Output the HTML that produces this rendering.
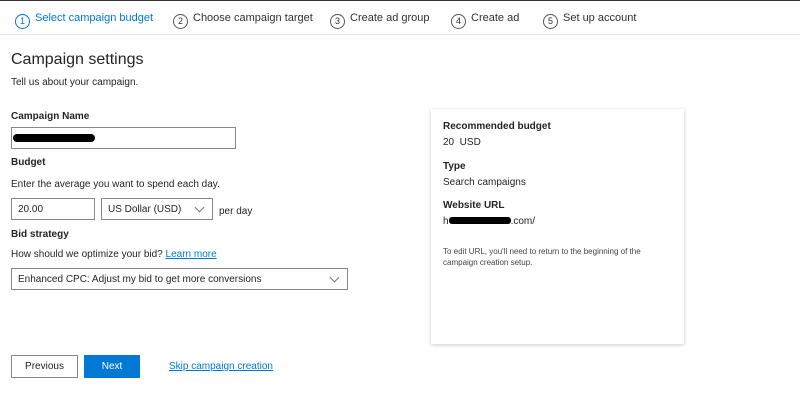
<!DOCTYPE html><html><head><style>
body{margin:0;width:800px;height:404px;background:#fff;font-family:"Liberation Sans",sans-serif;color:#252423;position:relative;overflow:hidden}
.a{position:absolute;white-space:nowrap}
.s{font-size:11px;color:#323130}
.c{display:inline-block;width:13px;height:13px;border:1px solid #555;border-radius:50%;font-size:9px;text-align:center;line-height:13px;margin-right:5px;vertical-align:-3px}
.b{font-weight:bold;font-size:10px}
.t{font-size:10px}
.box{position:absolute;border:1px solid #8a8886;background:#fff;box-sizing:border-box}
.chev{position:absolute;width:6px;height:6px;border-right:1px solid #777;border-bottom:1px solid #777;transform:rotate(45deg)}
</style></head><body>
<div class="a" style="left:0;top:0;width:800px;height:1px;background:#333"></div>
<div class="a" style="left:0;top:34px;width:800px;height:1px;background:#e6e6e6"></div>
<div class="a s" style="left:15px;top:12px;color:#0078d4"><span class="c" style="border-color:#0078d4;color:#0078d4">1</span>Select campaign budget</div>
<div class="a s" style="left:173px;top:12px"><span class="c">2</span>Choose campaign target</div>
<div class="a s" style="left:330px;top:12px"><span class="c">3</span>Create ad group</div>
<div class="a s" style="left:451px;top:12px"><span class="c">4</span>Create ad</div>
<div class="a s" style="left:543px;top:12px"><span class="c">5</span>Set up account</div>
<div class="a" style="left:11px;top:51px;font-size:16px">Campaign settings</div>
<div class="a t" style="left:11px;top:77px">Tell us about your campaign.</div>
<div class="a b" style="left:11px;top:111px">Campaign Name</div>
<div class="box" style="left:11px;top:127px;width:225px;height:22px"><div style="position:absolute;left:1px;top:6px;width:82px;height:8px;background:#000;border-radius:4px"></div></div>
<div class="a b" style="left:11px;top:157px">Budget</div>
<div class="a t" style="left:11px;top:179px">Enter the average you want to spend each day.</div>
<div class="box" style="left:11px;top:198px;width:84px;height:22px;font-size:10px;padding:5px 0 0 6px">20.00</div>
<div class="box" style="left:101px;top:198px;width:112px;height:22px;font-size:10px;padding:5px 0 0 6px">US Dollar (USD)<div class="chev" style="right:9px;top:5px"></div></div>
<div class="a t" style="left:219px;top:206px">per day</div>
<div class="a b" style="left:11px;top:229px">Bid strategy</div>
<div class="a t" style="left:11px;top:249px">How should we optimize your bid? <span style="color:#0078d4;text-decoration:underline">Learn more</span></div>
<div class="box" style="left:11px;top:268px;width:337px;height:22px;font-size:10px;padding:5px 0 0 6px">Enhanced CPC: Adjust my bid to get more conversions<div class="chev" style="right:9px;top:5px"></div></div>
<div class="a" style="left:431px;top:109px;width:253px;height:235px;background:#fff;box-shadow:0 1px 4px rgba(0,0,0,.2)"></div>
<div class="a b" style="left:443px;top:121px">Recommended budget</div>
<div class="a t" style="left:443px;top:137px">20&nbsp; USD</div>
<div class="a b" style="left:443px;top:161px">Type</div>
<div class="a t" style="left:443px;top:177px">Search campaigns</div>
<div class="a b" style="left:443px;top:200px">Website URL</div>
<div class="a t" style="left:443px;top:216px">h<span style="display:inline-block;width:62px;height:7px;background:#000;border-radius:3px;vertical-align:0"></span>.com/</div>
<div class="a" style="left:443px;top:246px;font-size:8px;line-height:11px;color:#444">To edit URL, you'll need to return to the beginning of the<br>campaign creation setup.</div>
<div class="box" style="left:11px;top:355px;width:67px;height:23px;font-size:10px;text-align:center;line-height:21px">Previous</div>
<div class="a" style="left:84px;top:355px;width:56px;height:23px;background:#0078d4;color:#fff;font-size:10px;text-align:center;line-height:23px">Next</div>
<div class="a t" style="left:169px;top:361px;color:#0078d4;text-decoration:underline">Skip campaign creation</div>
</body></html>
